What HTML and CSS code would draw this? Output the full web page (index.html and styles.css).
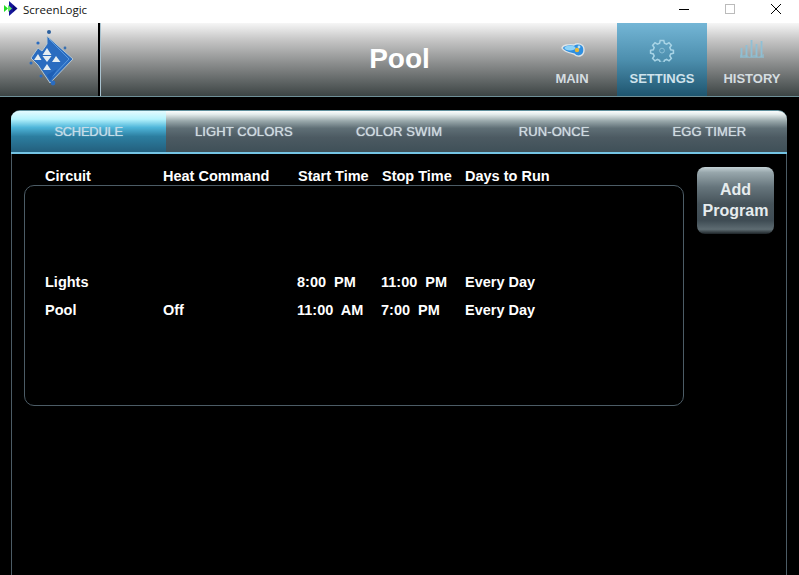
FILE: index.html
```html
<!DOCTYPE html>
<html lang="en">
<head>
<meta charset="utf-8">
<title>ScreenLogic</title>
<link rel="stylesheet" href="styles.css">
</head>
<body>
<div class="titlebar">
  <svg class="appicon" width="18" height="18" viewBox="0 0 18 18">
    <polygon points="5,1 13.5,8.5 5,16" fill="#16169a"/>
    <polygon points="9,5.5 13,8.5 9,11.5" fill="#0a0a70"/>
    <polygon points="0,5 4,8.5 0,12" fill="#22dd22"/>
    <polygon points="4,5 8,8.5 4,12" fill="#66ee66"/>
  </svg>
  <span class="apptitle">ScreenLogic</span>
  <div class="winbtns">
    <svg class="winbtn" width="46" height="18" viewBox="0 0 46 18"><path d="M18 9.5h10" stroke="#000" stroke-width="1"/></svg>
    <svg class="winbtn" width="46" height="18" viewBox="0 0 46 18"><rect x="18.5" y="4.5" width="9" height="9" fill="none" stroke="#bbb"/></svg>
    <svg class="winbtn" width="46" height="18" viewBox="0 0 46 18"><path d="M18 4l10 10M28 4l-10 10" stroke="#000" stroke-width="1"/></svg>
  </div>
</div>
<header class="header">
  <div class="logo">
    <svg width="55" height="62" viewBox="0 0 55 62">
      <path d="M22 9L48 32L25 56L19 47L13 38L6 31L13 21L17 24L22 17Z" fill="#2a6cc0" stroke="#b8c8d0" stroke-width="1" stroke-linejoin="round"/>
      <path d="M22 21L26.500 28H17.500ZM22 35L26.500 29H17.500ZM13 27L16.500 33H9ZM22 37L26 43H18ZM31 29L35.500 35H27Z" fill="#e6eef2"/>
      <path d="M24 12L44 32L25 52" fill="none" stroke="#5a9ae0" stroke-width="1"/>
      <path d="M22 48L32 42L25 54Z" fill="#1f5fb4"/>
      <circle cx="24" cy="5" r="2" fill="#2a5f9e"/>
      <circle cx="28" cy="56" r="2.400" fill="#2a6cc0"/>
      <circle cx="13" cy="16" r="1.600" fill="#2a6cc0"/>
      <circle cx="40" cy="21" r="1.400" fill="#3a70b0"/>
      <circle cx="6" cy="36" r="1.500" fill="#2a6cc0"/>
      <circle cx="16" cy="49" r="1.500" fill="#2a6cc0"/>
    </svg>
  </div>
  <div class="divider"></div>
  <h1 class="title">Pool</h1>
  <nav class="nav">
    <a class="navitem">
      <svg class="navicon" width="26" height="20" viewBox="0 0 26 20">
        <path d="M3 10C4 7 10 6 15 7C18 5 25 5 25 12C25 18 19 20 15 16C11 15 5 14 3 10Z" fill="#2f8fe0" stroke="#dfe4e6" stroke-width="1.400"/>
        <ellipse cx="11" cy="10" rx="5.500" ry="2.400" fill="#8fd4f8"/>
        <circle cx="18" cy="12" r="2.200" fill="#e8b93a"/>
        <circle cx="20" cy="9" r="1.400" fill="#b8e2f4"/>
      </svg>
      <span>MAIN</span>
    </a>
    <a class="navitem active">
      <svg class="navicon" width="26" height="24" viewBox="0 0 26 24">
        <path d="M11 1.500h4l.7 3 2.400 1 2.700-1.600 2.600 2.800-1.700 2.600 1 2.400 3 .7v3.200l-3 .8-1 2.300 1.700 2.700-2.600 2.700-2.700-1.600-2.400 1-.7 2.300h-4l-.7-2.300-2.400-1-2.700 1.600-2.600-2.700 1.700-2.700-1-2.300-3-.8v-3.200l3-.7 1-2.400-1.700-2.600 2.600-2.800 2.700 1.600 2.400-1z" transform="translate(1.300 1.200) scale(.9)" fill="none" stroke="#a8d4e6" stroke-width="1.700"/>
        <circle cx="13" cy="12.600" r="2.400" fill="none" stroke="#8cc0d6" stroke-width="1"/>
      </svg>
      <span>SETTINGS</span>
    </a>
    <a class="navitem">
      <svg class="navicon" width="26" height="22" viewBox="0 0 26 22">
        <path d="M2.500 10v9M7.500 7v12M12.500 2v17M17.500 6v13M22.500 3v16" stroke="#8fc0d6" stroke-width="1.800" fill="none"/>
        <path d="M1 16C4 20 6 14 9 18C12 21 15 14 18 18C20 20 23 16 25 16V20H1Z" fill="#8fbdd0" fill-opacity=".7"/>
      </svg>
      <span>HISTORY</span>
    </a>
  </nav>
</header>
<main class="panel">
  <div class="tabs">
    <div class="tab selected">SCHEDULE</div>
    <div class="tab">LIGHT COLORS</div>
    <div class="tab">COLOR SWIM</div>
    <div class="tab">RUN-ONCE</div>
    <div class="tab">EGG TIMER</div>
  </div>
  <div class="body">
    <div class="schedule">
      <div class="row headrow">
        <span>Circuit</span><span>Heat Command</span><span>Start Time</span><span>Stop Time</span><span>Days to Run</span>
      </div>
      <div class="listbox">
        <div class="row datarow">
          <span>Lights</span><span></span><span>8:00&nbsp; PM</span><span>11:00&nbsp; PM</span><span>Every Day</span>
        </div>
        <div class="row datarow">
          <span>Pool</span><span>Off</span><span>11:00&nbsp; AM</span><span>7:00&nbsp; PM</span><span>Every Day</span>
        </div>
      </div>
    </div>
    <button class="addbtn">Add<br>Program</button>
  </div>
</main>
</body>
</html>
```
FILE: styles.css
```css
* { box-sizing: border-box; }
html, body { margin: 0; height: 575px; background: #000; overflow: hidden; }
body { display: flex; flex-direction: column; font-family: "Liberation Sans", Arial, sans-serif; }

.titlebar { height: 23px; flex: none; background: #fff; display: flex; align-items: center; }
.appicon { margin: 0 4px 5px 4px; }
.apptitle { font: 11.5px "Open Sans", sans-serif; color: #111; margin-bottom: 5px; margin-left: -3px; }
.winbtns { margin-left: auto; display: flex; margin-bottom: 5px; }
.winbtn { display: block; }

.header { height: 74px; flex: none; display: flex; background: linear-gradient(#f6f6f6 0%, #c8c8c8 22%, #8c8e8e 55%, #3c4444 100%); border-bottom: 1px solid #6f9098; }
.logo { width: 98px; display: flex; align-items: center; justify-content: flex-start; padding: 0 0 3px 25px; }
.divider { width: 3px; background: #000; border-right: 1px solid #a9c3d0; }
.title { flex: 1; margin: 0; padding-left: 171px; text-align: center; font-size: 28px; font-weight: 700; line-height: 72px; color: #fff; }
.nav { display: flex; margin-right: 2px; }
.navitem { width: 90px; display: flex; flex-direction: column; align-items: center; color: #d5dde0; font-size: 13px; font-weight: 700; }
.navitem span { position: absolute; margin-top: 48px; }
.navicon { margin-top: 15px; }
.navitem.active { background: linear-gradient(#74b6d6 0%, #4d8fae 50%, #1e556f 100%); color: #cfe3ec; }

.panel { margin: 13px 12px 0 11px; flex: 1; display: flex; flex-direction: column; min-height: 0; }
.tabs { height: 42px; flex: none; display: grid; grid-template-columns: repeat(5, 1fr); border-radius: 9px 9px 0 0; overflow: hidden; border-top: 1px solid #5f8f9c; background: linear-gradient(#fbfdfd 0%, #e4ecec 8%, #9aa9ac 24%, #5f6f76 42%, #4c5a62 65%, #3f5058 100%); }
.tab { display: flex; align-items: center; justify-content: center; font-size: 13px; letter-spacing: .1px; color: #cfdbe0; text-shadow: 0 0 1px #cfdbe0; }
.tab.selected { background: linear-gradient(#e4fbff 0%, #b4f2fc 20%, #4fb6da 40%, #2c7ea0 62%, #235f7d 100%); color: #c5dde8; letter-spacing: -.3px; text-shadow: 0 0 1px #b8d4e0; }

.body { flex: 1; display: flex; align-items: flex-start; border: 1px solid #4c5c66; border-width: 0 1px; box-shadow: 0 -2px 0 #74c4e4; margin-top: 2px; padding: 13px 11px 0 12px; gap: 13px; }
.schedule { width: 660px; flex: none; }
.row { display: grid; grid-template-columns: 118px 134px 84px 84px 1fr; color: #fff; font-size: 14.500px; font-weight: 700; }
.headrow { height: 18px; padding-left: 21px; line-height: 18px; }
.headrow span:nth-child(n+3) { margin-left: 1px; }
.headrow span:nth-child(5) { margin-left: 0; }
.listbox { height: 221px; border: 1px solid #4c5c66; border-radius: 10px; padding: 82px 0 0 20px; }
.datarow { height: 28px; line-height: 28px; }

.addbtn { width: 77px; height: 67px; border: 0; border-radius: 8px; padding: 0 0 1px; font: 700 16px/21px "Liberation Sans", Arial, sans-serif; color: #e6ecee; background: linear-gradient(#c4d2d6 0%, #98a7ac 8%, #66757c 30%, #46535a 55%, #3f4c54 80%, #5e6c72 93%, #1d2327 100%); }
```
